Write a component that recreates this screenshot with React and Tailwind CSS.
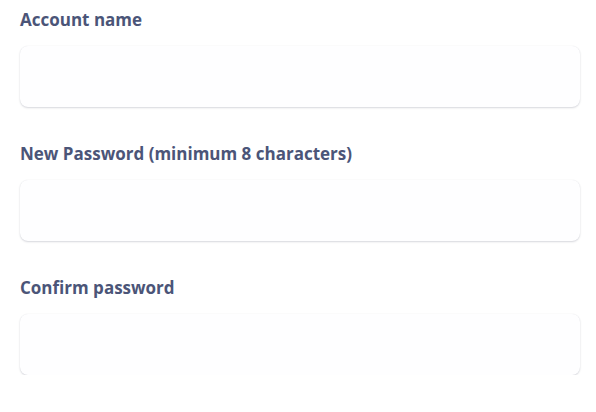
export default function App() {
  const fields = [
    { label: 'Account name', type: 'text' },
    { label: 'New Password (minimum 8 characters)', type: 'password' },
    { label: 'Confirm password', type: 'password' },
  ];

  return (
    <div className="flex w-full flex-col gap-[35px] bg-white pt-2 pl-5 pr-4 font-['Open_Sans',sans-serif]">
      {fields.map((f) => (
        <div key={f.label}>
          <label className="block text-[17px] leading-6 font-bold text-[#4b5578]">{f.label}</label>
          <input
            type={f.type}
            className="mt-[14px] block h-[61px] w-full rounded-lg bg-[#fefeff] px-4 shadow-[0_1px_2px_rgba(60,64,90,0.2),0_0_1px_rgba(60,64,90,0.1)] outline-none"
          />
        </div>
      ))}
    </div>
  );
}
